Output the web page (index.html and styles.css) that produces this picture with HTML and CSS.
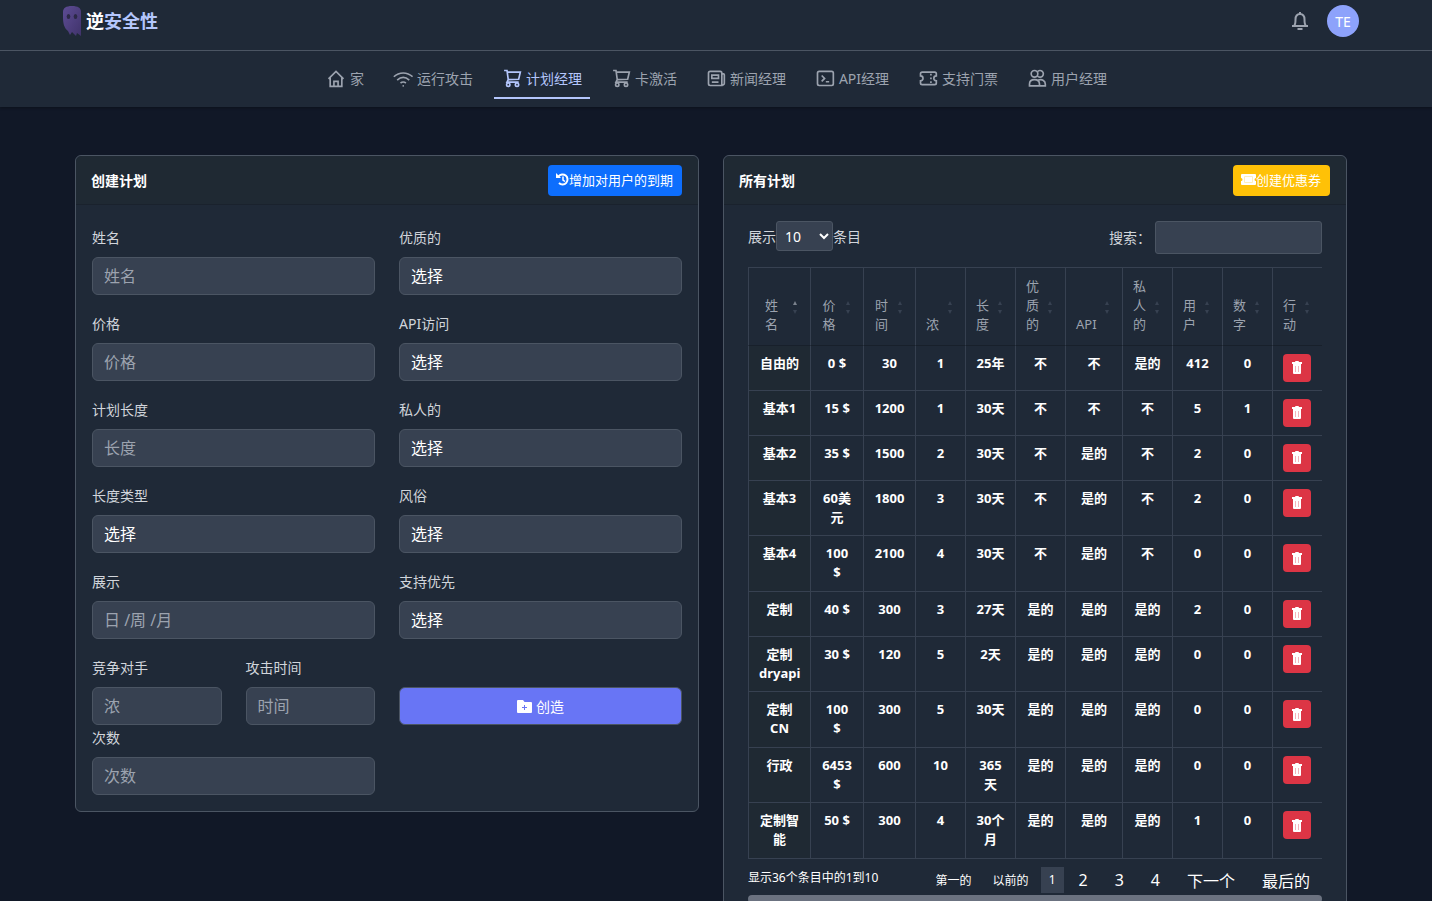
FILE: index.html
```html
<!DOCTYPE html>
<html lang="zh-CN">
<head>
  <meta charset="UTF-8">
  <meta name="viewport" content="width=device-width, initial-scale=1.0">
  <title>计划经理</title>
  <link rel="stylesheet" href="styles.css">
</head>
<body>
  <header class="header">
    <div class="topbar">
      <a class="logo" href="#">
        <svg class="ghost" viewBox="0 0 18 30" width="18" height="30">
          <defs>
            <linearGradient id="ghostFill" x1="0" y1="0" x2="1" y2="1">
              <stop offset="0" stop-color="#5d4c94"/>
              <stop offset="1" stop-color="#40336b"/>
            </linearGradient>
          </defs>
          <path fill="url(#ghostFill)" d="M0 6C0 2 3 0 9 0s9 2 9 6v24l-4-3-1 3-4-4-2 3-2-4C1 22 0 17 0 11z"/>
          <ellipse cx="5.500" cy="10.500" rx="1.800" ry="2.500" fill="#2c2947"/>
          <ellipse cx="12.500" cy="10.500" rx="1.800" ry="2.500" fill="#2c2947"/>
        </svg>
        <span>逆<span class="logo-accent">安全性</span></span>
      </a>
      <div class="user">
        <button class="bell" aria-label="通知">
          <svg viewBox="0 0 18 20" width="18" height="20"><path d="M1 15h16M3 15c1.500-1.500 1.500-3.500 1.500-6.500C4.500 5 6.500 3 9 3s4.500 2 4.500 5.500c0 3 0 5 1.500 6.500M9 3V1"/><path d="M6.500 18h5"/></svg>
        </button>
        <button class="avatar">TE</button>
      </div>
    </div>
    <nav class="nav">
      <a href="#"><svg viewBox="0 0 24 24"><path d="M3 13 12 4l9 9M5 11v11h14V11M9.500 22v-6h5v6"/></svg>家</a>
      <a href="#"><svg viewBox="0 0 24 24"><path d="M1 10.500c6.500-6 16-6 22.500 0M5 14.500c4.500-4 10-4 14.500 0M9 18c2-1.500 4.500-1.500 6.500 0M11.500 21.500h1.500"/></svg>运行攻击</a>
      <a href="#" class="active"><svg viewBox="0 0 24 24"><path d="M2.500 3H6l1.500 11M6.500 5H22l-2 8.500-12.500.5L6 17h14"/><circle cx="7.500" cy="20" r="2"/><circle cx="18" cy="20" r="2"/></svg>计划经理</a>
      <a href="#"><svg viewBox="0 0 24 24"><path d="M2.500 3H6l1.500 11M6.500 5H22l-2 8.500-12.500.5L6 17h14"/><circle cx="7.500" cy="20" r="2"/><circle cx="18" cy="20" r="2"/></svg>卡激活</a>
      <a href="#"><svg viewBox="0 0 24 24"><path d="M19 7h2a1 1 0 0 1 1 1v10.500a2 2 0 0 1-3 1.500V6a2 2 0 0 0-2-2H5a2 2 0 0 0-2 2v13a2 2 0 0 0 2 2h15M7 8.500h8v4H7zM7 17h8"/></svg>新闻经理</a>
      <a href="#"><svg viewBox="0 0 24 24"><rect x="3" y="4" width="19" height="17" rx="2"/><path d="m8 9 3.500 3.500L8 16M13 16.500h4"/></svg>API经理</a>
      <a href="#"><svg viewBox="0 0 24 24"><path d="M5 5h15a2 2 0 0 1 2 2v2.500a3 3 0 0 0 0 6V18a2 2 0 0 1-2 2H5a2 2 0 0 1-2-2v-2.500a3 3 0 0 0 0-6V7a2 2 0 0 1 2-2zM15.500 7v2M15.500 11.500v2M15.500 16v2"/></svg>支持门票</a>
      <a href="#"><svg viewBox="0 0 24 24"><circle cx="9" cy="7" r="4"/><path d="M12.500 4.500a4 4 0 1 1 0 5M3 21.500v-2c0-3.500 2.500-5.500 6-5.500s6 2 6 5.500v2zM13.500 14.500c5-1.500 8.500 1 8.500 5v2h-7"/></svg>用户经理</a>
    </nav>
  </header>

  <main class="container">
    <section class="card">
      <div class="card-header">
        <h2>创建计划</h2>
        <button class="btn btn-primary"><svg viewBox="0 0 13 13" width="13" height="13"><path d="M2.500 3.500A5 5 0 1 1 3 10" fill="none" stroke="currentColor" stroke-width="2"/><path d="M0 0v5h5z" fill="currentColor"/><path d="M7 3.500V7l2 1.500" fill="none" stroke="currentColor" stroke-width="1.500"/></svg>增加对用户的到期</button>
      </div>
      <form class="plan-form">
        <div class="field"><label for="name">姓名</label><input type="text" id="name" placeholder="姓名"></div>
        <div class="field"><label for="premium">优质的</label><select id="premium"><option>选择</option></select></div>
        <div class="field"><label for="price">价格</label><input type="text" id="price" placeholder="价格"></div>
        <div class="field"><label for="api">API访问</label><select id="api"><option>选择</option></select></div>
        <div class="field"><label for="length">计划长度</label><input type="text" id="length" placeholder="长度"></div>
        <div class="field"><label for="private">私人的</label><select id="private"><option>选择</option></select></div>
        <div class="field"><label for="lengthType">长度类型</label><select id="lengthType"><option>选择</option></select></div>
        <div class="field"><label for="custom">风俗</label><select id="custom"><option>选择</option></select></div>
        <div class="field"><label for="display">展示</label><input type="text" id="display" placeholder="日 /周 /月"></div>
        <div class="field"><label for="support">支持优先</label><select id="support"><option>选择</option></select></div>
        <div class="field-pair">
          <div class="field"><label for="conc">竞争对手</label><input type="text" id="conc" placeholder="浓"></div>
          <div class="field"><label for="time">攻击时间</label><input type="text" id="time" placeholder="时间"></div>
        </div>
        <button type="button" class="create"><svg viewBox="0 0 15 13" width="15" height="13"><path fill="currentColor" d="M1 0h5l1.500 2H14a1 1 0 0 1 1 1v9a1 1 0 0 1-1 1H1a1 1 0 0 1-1-1V1a1 1 0 0 1 1-1z"/><path d="M7.500 5v5M5 7.500h5" stroke="#6875f5"/></svg>创造</button>
        <div class="field field-last"><label for="times">次数</label><input type="text" id="times" placeholder="次数"></div>
      </form>
    </section>

    <section class="card">
      <div class="card-header">
        <h2>所有计划</h2>
        <button class="btn btn-warning"><svg viewBox="0 0 15 11" width="15" height="11"><path fill="currentColor" d="M1 0h13a1 1 0 0 1 1 1v3a1.500 1.500 0 0 0 0 3v3a1 1 0 0 1-1 1H1a1 1 0 0 1-1-1V7a1.500 1.500 0 0 0 0-3V1a1 1 0 0 1 1-1z"/><path d="M3.500 2.500h8v6h-8z" fill="none" stroke="#ffeeba"/></svg>创建优惠券</button>
      </div>
      <div class="plans">
        <div class="table-tools">
          <label class="show">展示<select><option>10</option><option>25</option><option>50</option></select>条目</label>
          <label class="search">搜索：<input type="search"></label>
        </div>
        <table class="plans-table">
          <thead>
            <tr>
              <th class="col-name sorted">姓名</th>
              <th class="col-price">价格</th>
              <th class="col-time">时间</th>
              <th>浓</th>
              <th>长度</th>
              <th>优质的</th>
              <th class="col-api">API</th>
              <th>私人的</th>
              <th>用户</th>
              <th>数字</th>
              <th>行动</th>
            </tr>
          </thead>
          <tbody id="planRows"></tbody>
        </table>
        <div class="table-footer">
          <span class="info">显示36个条目中的1到10</span>
          <div class="pagination">
            <button class="small">第一的</button>
            <button class="small">以前的</button>
            <button class="small current">1</button>
            <button>2</button>
            <button>3</button>
            <button>4</button>
            <button>下一个</button>
            <button>最后的</button>
          </div>
        </div>
        <div class="scrollbar"></div>
      </div>
    </section>
  </main>

  <script>
    const plans = [
      ["自由的", "0 $", "30", "1", "25年", "不", "不", "是的", "412", "0"],
      ["基本1", "15 $", "1200", "1", "30天", "不", "不", "不", "5", "1"],
      ["基本2", "35 $", "1500", "2", "30天", "不", "是的", "不", "2", "0"],
      ["基本3", "60美元", "1800", "3", "30天", "不", "是的", "不", "2", "0"],
      ["基本4", "100 $", "2100", "4", "30天", "不", "是的", "不", "0", "0"],
      ["定制", "40 $", "300", "3", "27天", "是的", "是的", "是的", "2", "0"],
      ["定制 dryapi", "30 $", "120", "5", "2天", "是的", "是的", "是的", "0", "0"],
      ["定制 CN", "100 $", "300", "5", "30天", "是的", "是的", "是的", "0", "0"],
      ["行政", "6453 $", "600", "10", "365天", "是的", "是的", "是的", "0", "0"],
      ["定制智能", "50 $", "300", "4", "30个月", "是的", "是的", "是的", "1", "0"]
    ];

    const trash = `<button class="delete" aria-label="删除">
      <svg viewBox="0 0 12 13" width="12" height="13"><path fill="currentColor" d="M4.500 0h3l.5 1h3v2H1V1h3zM2 3h8v9a1 1 0 0 1-1 1H3a1 1 0 0 1-1-1z"/><path d="M4.500 5v6M7.500 5v6" stroke="#f3b5bb"/></svg>
    </button>`;

    document.getElementById("planRows").innerHTML = plans.map(plan =>
      `<tr>${plan.map(value => `<td>${value}</td>`).join("")}<td>${trash}</td></tr>`
    ).join("");
  </script>
</body>
</html>
```
FILE: styles.css
```css
* {
  box-sizing: border-box;
}

body {
  margin: 0;
  background-color: #111827;
  color: #d1d5db;
  font-family: "Noto Sans", "Noto Sans CJK SC", sans-serif;
  font-size: 14px;
  line-height: 21px;
}

button, input, select {
  font-family: inherit;
  color: white;
}

button {
  cursor: pointer;
}

a {
  color: inherit;
  text-decoration: none;
}

.header {
  background-color: #1f2937;
  box-shadow: 0 1px 3px rgba(0, 0, 0, 0.3);
}

.topbar {
  display: flex;
  justify-content: space-between;
  align-items: center;
  padding: 5px 73px 13px 63px;
  border-bottom: 1px solid #4b5563;
}

.logo {
  display: flex;
  align-items: center;
  gap: 5px;
  color: white;
  font-size: 18px;
  font-weight: bold;
}

.logo-accent {
  color: #b4c6fc;
}

.user {
  display: flex;
  align-items: center;
  gap: 18px;
}

.bell {
  display: flex;
  padding: 0;
  border: none;
  background: none;
  color: #9ca3af;
}

.bell svg {
  fill: none;
  stroke: currentColor;
  stroke-width: 2;
}

.avatar {
  width: 32px;
  height: 32px;
  padding: 0;
  border: none;
  border-radius: 50%;
  background-color: #8da2fb;
  font-size: 14px;
}

.nav {
  display: flex;
  justify-content: center;
  gap: 13px;
  padding: 8px 0 8px 1px;
  color: #9ca3af;
}

.nav a {
  display: flex;
  align-items: center;
  gap: 4px;
  height: 40px;
  padding: 0 8px;
  border-bottom: 2px solid transparent;
}

.nav svg {
  width: 20px;
  height: 20px;
  fill: none;
  stroke: currentColor;
  stroke-width: 2;
}

.nav .active {
  color: #b4c6fc;
  border-color: #b4c6fc;
}

.container {
  display: grid;
  grid-template-columns: 1fr 1fr;
  gap: 24px;
  align-items: start;
  padding: 48px 85px 24px 75px;
}

.card {
  min-width: 0;
  background-color: #1f2937;
  border: 1px solid #4b5563;
  border-radius: 6px;
}

.card-header {
  display: flex;
  justify-content: space-between;
  align-items: center;
  padding: 9px 16px 8px 15px;
  background-color: #1f2933;
  border-bottom: 1px solid #1a222d;
  border-radius: 6px 6px 0 0;
}

.card-header h2 {
  margin: 0;
  color: white;
  font-size: 14px;
}

.btn {
  display: flex;
  align-items: center;
  height: 31px;
  padding: 0 9px 2px 8px;
  border: none;
  border-radius: 4px;
  font-size: 13px;
}

.btn-primary {
  background-color: #0d6efd;
}

.btn-warning {
  background-color: #ffc107;
}

.plan-form {
  display: grid;
  grid-template-columns: 1fr 1fr;
  gap: 18px 24px;
  padding: 22px 16px 16px;
}

.field {
  min-width: 0;
}

.field label {
  display: block;
  margin-bottom: 9px;
}

.field input, .field select {
  display: block;
  width: 100%;
  height: 38px;
  padding: 0 11px;
  appearance: none;
  background-color: #374151;
  border: 1px solid #4b5563;
  border-radius: 6px;
  font-size: 16px;
}

.field input::placeholder {
  color: #9ca3af;
}

.field-pair {
  display: grid;
  grid-template-columns: 1fr 1fr;
  gap: 24px;
}

.field-last {
  margin-top: -16px;
}

.create {
  display: flex;
  align-items: center;
  align-self: end;
  justify-content: center;
  gap: 4px;
  height: 38px;
  background-color: #6875f5;
  border: 1px solid #4b5563;
  border-radius: 6px;
  font-size: 14px;
}

.plans {
  padding: 16px 24px;
}

.table-tools {
  display: flex;
  justify-content: space-between;
  align-items: flex-start;
  margin-bottom: 13px;
}

.show, .search {
  display: flex;
  align-items: center;
}

.show select {
  width: 57px;
  height: 30px;
  padding: 0 4px;
  background-color: #374151;
  border: 1px solid #4b5563;
  border-radius: 3px;
  font-size: 14px;
}

.search {
  gap: 4px;
}

.search input {
  width: 167px;
  height: 33px;
  background-color: #374151;
  border: 1px solid #4b5563;
  border-radius: 3px;
}

.plans-table {
  width: 100%;
  table-layout: fixed;
  border-spacing: 0;
  border-top: 1px solid #374151;
  font-size: 13px;
  line-height: 1.48;
  text-align: center;
}

.plans-table th {
  position: relative;
  padding: 9px 26px 10px 10px;
  border-left: 1px solid #374151;
  border-bottom: 1px solid #18202b;
  color: #9ca3af;
  font-weight: normal;
  vertical-align: bottom;
}

.col-name {
  width: 62px;
}

.col-price {
  width: 53px;
}

.col-time {
  width: 52px;
}

.col-api {
  width: 57px;
}

/* sort arrows */
.plans-table th::before, .plans-table th::after {
  content: "";
  position: absolute;
  right: 13px;
  border: 2px solid transparent;
}

.plans-table th::before {
  bottom: 40px;
  border-bottom: 4px solid #374151;
}

.plans-table th::after {
  bottom: 29px;
  border-top: 4px solid #374151;
}

.plans-table .sorted::before {
  border-bottom-color: #7b828d;
}

.plans-table td {
  padding: 8px 10px;
  border-left: 1px solid #374151;
  border-bottom: 1px solid #374151;
  color: white;
  font-weight: bold;
  vertical-align: top;
}

.plans-table td:first-child {
  background-color: #1f2933;
}

.plans-table td:last-child {
  padding-right: 0;
  text-align: left;
}

.delete {
  display: flex;
  align-items: center;
  justify-content: center;
  width: 28px;
  height: 28px;
  padding: 0;
  background-color: #dc3545;
  border: none;
  border-radius: 4px;
}

.table-footer {
  display: flex;
  justify-content: space-between;
  align-items: flex-start;
  padding: 8px 0 2px;
  color: white;
}

.info {
  font-size: 12px;
}

.pagination {
  display: flex;
  align-items: center;
  gap: 3px;
}

.pagination button {
  height: 26px;
  padding: 0 12px;
  background: none;
  border: none;
  font-size: 16px;
}

.pagination .small {
  padding: 0 9px;
  font-size: 12px;
}

.pagination .current {
  padding: 0 8px;
  background-color: #374151;
}

.scrollbar {
  height: 8px;
  background-color: #6b7280;
  border-radius: 4px;
}
```
